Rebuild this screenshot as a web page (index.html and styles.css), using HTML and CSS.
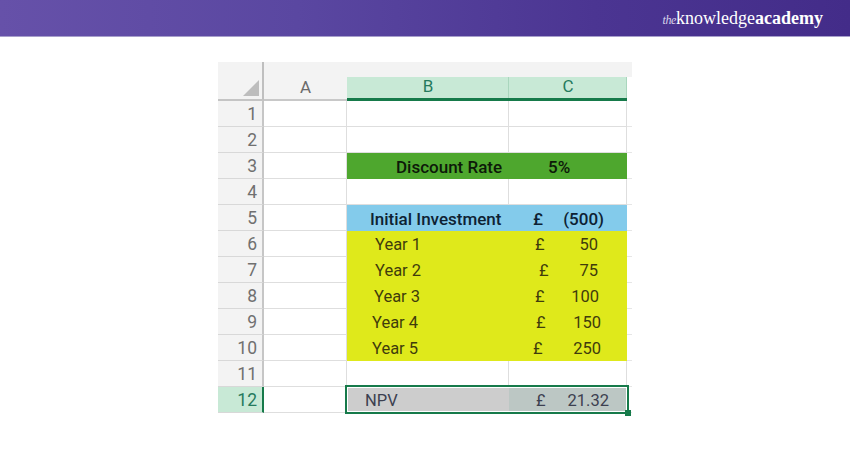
FILE: index.html
```html
<!DOCTYPE html>
<html lang="en">
<head>
<meta charset="utf-8">
<title>NPV in Excel</title>
<link rel="stylesheet" href="styles.css">
</head>
<body>
<header class="banner">
  <div class="logo"><span class="logo-the">the</span><span class="logo-kn">knowledge</span><span class="logo-ac">academy</span></div>
</header>
<main class="stage">
  <div class="sheet">
    <div class="corner"><svg class="corner-tri" width="16" height="16" viewBox="0 0 16 16"><path d="M16 0V16H0Z" fill="#bdbdbd"/></svg></div>
    <div class="ch">A</div>
    <div class="ch ch-sel">B</div>
    <div class="ch ch-sel">C</div>
    <div class="ch-tail"></div>

    <div class="rh">1</div><div class="c"></div><div class="c"></div><div class="c"></div><div class="tail"></div>
    <div class="rh">2</div><div class="c"></div><div class="c"></div><div class="c"></div><div class="tail"></div>
    <div class="rh">3</div><div class="c"></div><div class="c green strong p-disc">Discount Rate</div><div class="c green strong p-rate">5%</div><div class="tail"></div>
    <div class="rh">4</div><div class="c"></div><div class="c"></div><div class="c"></div><div class="tail"></div>
    <div class="rh">5</div><div class="c"></div><div class="c blue strong p-init">Initial Investment</div><div class="c blue strong money"><span class="cur p0">£</span><span class="val r-neg">(500)</span></div><div class="tail"></div>
    <div class="rh">6</div><div class="c"></div><div class="c lime p-y1">Year 1</div><div class="c lime money"><span class="cur p1">£</span><span class="val r-a">50</span></div><div class="tail"></div>
    <div class="rh">7</div><div class="c"></div><div class="c lime p-y1">Year 2</div><div class="c lime money"><span class="cur p3">£</span><span class="val r-a">75</span></div><div class="tail"></div>
    <div class="rh">8</div><div class="c"></div><div class="c lime p-y3">Year 3</div><div class="c lime money"><span class="cur p1">£</span><span class="val r-b">100</span></div><div class="tail"></div>
    <div class="rh">9</div><div class="c"></div><div class="c lime p-y4">Year 4</div><div class="c lime money"><span class="cur p2">£</span><span class="val r-c">150</span></div><div class="tail"></div>
    <div class="rh">10</div><div class="c"></div><div class="c lime p-y4">Year 5</div><div class="c lime money"><span class="cur p0">£</span><span class="val r-c">250</span></div><div class="tail"></div>
    <div class="rh">11</div><div class="c"></div><div class="c"></div><div class="c"></div><div class="tail"></div>
    <div class="rh rh-sel">12</div><div class="c"></div><div class="c npv p-npv">NPV</div><div class="c npv-val money"><span class="cur p2">£</span><span class="val r-d">21.32</span></div><div class="tail"></div>
    <div class="selection"><span class="handle"></span></div>
  </div>
</main>
</body>
</html>
```
FILE: styles.css
```css
* { box-sizing: border-box; }
html, body { margin: 0; padding: 0; background: #fff; }
body { width: 850px; height: 450px; overflow: hidden; font-family: Roboto, "Noto Sans", sans-serif; }

.banner {
  height: 37px;
  display: flex;
  justify-content: flex-end;
  align-items: center;
  padding: 1px 27px 0 0;
  background: linear-gradient(90deg, #6651a9 0%, #5a47a1 35%, #4b3592 70%, #432c89 100%);
  border-bottom: 1px solid #a79fcb;
}
.logo { font-family: "Liberation Serif", serif; font-size: 18px; line-height: 24px; color: #fff; white-space: nowrap; }
.logo-the { font-style: italic; font-size: 12px; letter-spacing: -0.4px; color: #d9d4ea; }
.logo-ac { font-weight: 700; }

.stage { padding: 25px 0 0 218px; }
.sheet {
  position: relative;
  display: grid;
  grid-template-columns: 46px 83px 162px 118px 5px;
  grid-template-rows: 39px repeat(12, 26px);
  width: 414px;
  font-size: 16.5px;
  color: #222;
}

.corner { background: #f3f3f3; border-right: 2px solid #bfbfbf; border-bottom: 2px solid #c4c4c4; display: flex; align-items: flex-end; justify-content: flex-end; padding: 0 3px 3px 0; }
.ch {
  background: #f3f3f3;
  border-bottom: 2px solid #c8c8c8;
  display: flex; align-items: flex-end; justify-content: center;
  color: #6b6b6b; font-size: 17px; line-height: 24px;
}
.ch-sel {
  background: linear-gradient(#f3f3f3 0 15px, #c8e9d6 15px);
  border-bottom: 3px solid #167a4a;
  color: #257a5d;
  position: relative;
}
.ch-sel::after { content: ""; position: absolute; right: 0; top: 15px; bottom: 0; width: 1px; background: #a9d6bd; }
.ch-tail { background: linear-gradient(#f3f3f3 0 15px, #fff 15px); }

.rh {
  background: #f3f3f3;
  border-right: 2px solid #c6c6c6;
  border-bottom: 1px solid #d8d8d8;
  display: flex; align-items: center; justify-content: flex-end;
  padding: 1px 5px 0 0;
  font-size: 17.5px; color: #707070;
}
.rh-sel { background: #c8e9d6; color: #257a5d; border-right-color: #167a4a; }

.c {
  display: flex; align-items: center;
  padding-top: 2px;
  border-right: 1px solid #dedede;
  border-bottom: 1px solid #dedede;
  white-space: nowrap; line-height: 20px;
}
.tail { border-bottom: 1px solid #e6e6e6; }

.green { background: #4ea72e; border-color: #4ea72e; color: #0d1a09; }
.blue { background: #83cbeb; border-color: #83cbeb; color: #0d2233; }
.lime { background: #dfe91b; border-color: #dfe91b; color: #3f3c0c; }
.npv { background: #cdcdcd; border-color: #cdcdcd; color: #3c4050; }
.npv-val { background: #bcc7c4; border-color: #bcc7c4; color: #3c4050; }
.strong { font-weight: 500; font-size: 17px; }

.p-disc { padding-left: 49px; }
.p-rate { padding-left: 39px; }
.p-init { padding-left: 23px; }
.p-y1 { padding-left: 28px; }
.p-y3 { padding-left: 27px; }
.p-y4 { padding-left: 25px; }
.p-npv { padding-left: 18px; }

.cur { display: block; }
.p0 { padding-left: 24px; }
.p1 { padding-left: 26px; }
.p2 { padding-left: 27px; }
.p3 { padding-left: 30px; }
.val { margin-left: auto; }
.r-neg { padding-right: 22px; }
.r-a { padding-right: 28px; }
.r-b { padding-right: 27px; }
.r-c { padding-right: 25px; }
.r-d { padding-right: 17px; }

.selection {
  position: absolute;
  left: 127px; top: 323px;
  width: 284px; height: 29px;
  border: 2px solid #167a4a;
  box-shadow: inset 0 0 0 1px #fff;
  pointer-events: none;
}
.handle { position: absolute; right: -4px; bottom: -4px; width: 6px; height: 6px; background: #167a4a; }
```
